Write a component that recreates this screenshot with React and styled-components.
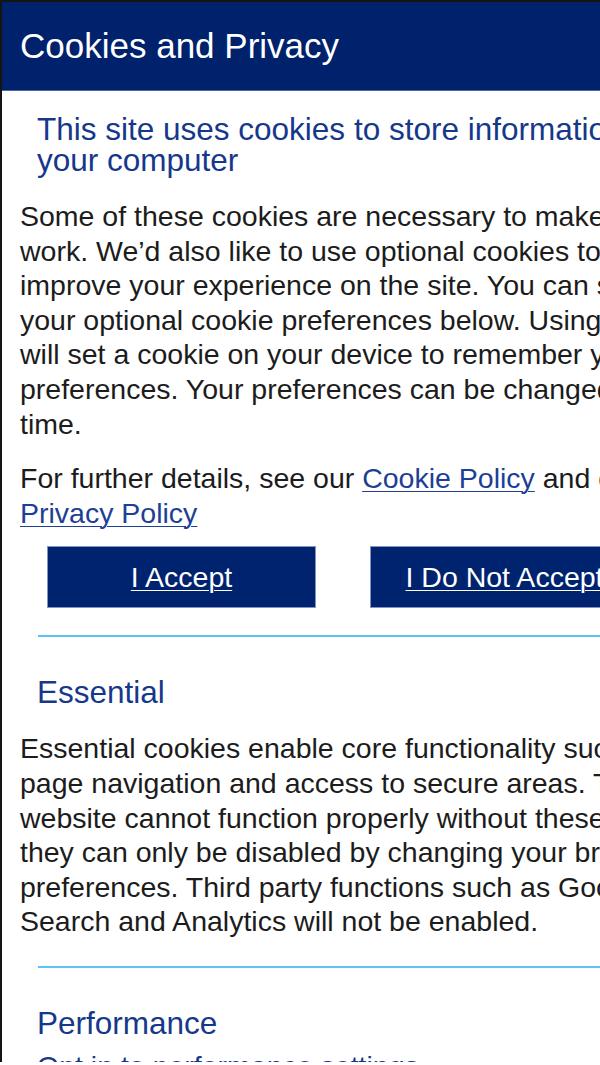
import styled, { createGlobalStyle } from "styled-components";

const GlobalStyle = createGlobalStyle`
  html, body {
    margin: 0;
    padding: 0;
    background: #ffffff;
    overflow: hidden;
  }
`;

const Viewport = styled.div`
  width: 600px;
  height: 1065px;
  overflow: hidden;
`;

const Dialog = styled.section`
  width: 745px;
  height: 1060px;
  overflow: hidden;
  border-top: 2px solid #141414;
  border-left: 2px solid #141414;
  background: #ffffff;
  font-family: "Liberation Sans", Arial, sans-serif;
`;

const Header = styled.header`
  height: 88px;
  display: flex;
  align-items: center;
  padding: 0 18px;
  background: #00216c;
  border-bottom: 1px solid #4a67a5;
`;

const Title = styled.h1`
  margin: 0;
  font-size: 35px;
  line-height: 40px;
  font-weight: 400;
  color: #ffffff;
`;

const Body = styled.div`
  padding: 0 18px;
  width: 705px;
`;

const Heading = styled.h2`
  margin: ${(p) => p.$top}px 17px 0;
  font-size: 31.5px;
  line-height: 31px;
  font-weight: 400;
  color: #16388b;
`;

const Text = styled.p`
  margin: ${(p) => p.$top}px 0 0;
  font-size: 28.5px;
  line-height: 34.6px;
  color: #1c1c1c;
`;

const Link = styled.a`
  color: #1d3f96;
  text-decoration: underline;
  text-underline-offset: 3px;
  text-decoration-thickness: 1px;
`;

const Actions = styled.div`
  display: flex;
  gap: 54px;
  margin: 16px 0 0 27px;
`;

const Button = styled.button`
  width: 269px;
  height: 62px;
  flex: none;
  background: #00236f;
  border: 1px solid #8393c2;
  color: #ffffff;
  font-family: "Liberation Sans", Arial, sans-serif;
  font-size: 28.5px;
  text-decoration: underline;
  text-underline-offset: 3px;
  text-decoration-thickness: 1px;
  cursor: pointer;
`;

const Divider = styled.div`
  height: 2px;
  margin: 27px 17px 0 18px;
  background: #5cc3f3;
`;

const Option = styled.div`
  margin: 10px 17px 0;
  font-size: 28.5px;
  line-height: 34.6px;
  color: #16388b;
`;

const App = () => {
  return (
    <Viewport>
      <GlobalStyle />
      <Dialog>
        <Header>
          <Title>Cookies and Privacy</Title>
        </Header>
        <Body>
          <Heading $top={23}>
            This site uses cookies to store information on your computer
          </Heading>
          <Text $top={23}>
            Some of these cookies are necessary to make our site work. We’d
            also like to use optional cookies to help us improve your
            experience on the site. You can select your optional cookie
            preferences below. Using this tool will set a cookie on your device
            to remember your preferences. Your preferences can be changed at
            any time.
          </Text>
          <Text $top={20}>
            For further details, see our <Link href="#">Cookie Policy</Link>{" "}
            and our <Link href="#">Privacy Policy</Link>
          </Text>
          <Actions>
            <Button>I Accept</Button>
            <Button>I Do Not Accept</Button>
          </Actions>
          <Divider />
          <Heading $top={40}>Essential</Heading>
          <Text $top={23}>
            Essential cookies enable core functionality such as page navigation
            and access to secure areas. The website cannot function properly
            without these cookies; they can only be disabled by changing your
            browser preferences. Third party functions such as Google Search
            and Analytics will not be enabled.
          </Text>
          <Divider />
          <Heading $top={40}>Performance</Heading>
          <Option>Opt in to performance settings</Option>
        </Body>
      </Dialog>
    </Viewport>
  );
};

export default App;
